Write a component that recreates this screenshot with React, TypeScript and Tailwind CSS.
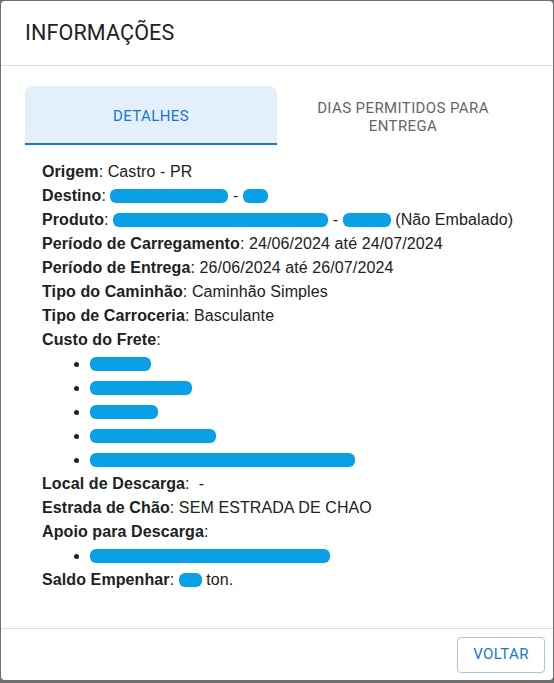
import React from "react";

const Blob = ({ w, className = "" }: { w: number; className?: string }) => (
  <span
    className={`inline-block h-[14px] rounded-[6px] bg-[#0aa0e6] align-[-2px] ${className}`}
    style={{ width: w }}
  />
);

const Row = ({ label, children }: { label: string; children?: React.ReactNode }) => (
  <div className="whitespace-nowrap">
    <span className="font-bold">{label}</span>: {children}
  </div>
);

export default function App() {
  return (
    <div className="w-[554px] h-[683px] bg-[#6f6f6f] pt-px pl-px overflow-hidden">
      <div className="w-[552px] h-[679px] bg-white rounded-[4px] flex flex-col overflow-hidden">
        <div className="h-[64px] shrink-0 px-6 flex items-center border-b border-[#dedede] box-content">
          <h2 className="font-['Roboto',sans-serif] text-[21.5px] leading-8 text-[#212121] tracking-[0.15px]">
            INFORMAÇÕES
          </h2>
        </div>
        <div className="flex-1 px-6 pt-5 border-b border-[#dedede]">
          <div className="grid grid-cols-2 font-['Roboto',sans-serif] text-[15px] leading-[18px] tracking-[0.4px]">
            <div className="h-[59px] pt-[2px] flex items-center justify-center text-center rounded-t-lg bg-[#e3f0fb] text-[#1976d2] border-b-2 border-[#1976d2]">
              DETALHES
            </div>
            <div className="h-[59px] pt-[2px] flex items-center justify-center text-center text-[#666666] px-8">
              DIAS PERMITIDOS PARA ENTREGA
            </div>
          </div>
          <div className="pt-[15px] pl-[17px] font-['Liberation_Sans',Arial,sans-serif] text-[16px] leading-6 tracking-[0.1px] text-[#212121]">
            <Row label="Origem">Castro - PR</Row>
            <Row label="Destino">
              <Blob w={118} /> - <Blob w={25} />
            </Row>
            <Row label="Produto">
              <Blob w={215} /> - <Blob w={48} /> (Não Embalado)
            </Row>
            <Row label="Período de Carregamento">24/06/2024 até 24/07/2024</Row>
            <Row label="Período de Entrega">26/06/2024 até 26/07/2024</Row>
            <Row label="Tipo do Caminhão">Caminhão Simples</Row>
            <Row label="Tipo de Carroceria">Basculante</Row>
            <Row label="Custo do Frete" />
            <ul className="list-disc pl-12">
              <li><Blob w={61} /></li>
              <li><Blob w={102} /></li>
              <li><Blob w={68} /></li>
              <li><Blob w={126} /></li>
              <li><Blob w={265} /></li>
            </ul>
            <Row label="Local de Descarga">&nbsp;-</Row>
            <Row label="Estrada de Chão">SEM ESTRADA DE CHAO</Row>
            <Row label="Apoio para Descarga" />
            <ul className="list-disc pl-12">
              <li><Blob w={240} /></li>
            </ul>
            <Row label="Saldo Empenhar">
              <Blob w={23} /> ton.
            </Row>
          </div>
        </div>
        <div className="h-[51px] shrink-0 flex items-center justify-end px-2">
          <button className="h-[36px] w-[88px] rounded-[4px] border border-[#a3c8ef] text-[#1976d2] font-['Roboto',sans-serif] text-[15px] font-normal tracking-[0.4px]">
            VOLTAR
          </button>
        </div>
      </div>
    </div>
  );
}
